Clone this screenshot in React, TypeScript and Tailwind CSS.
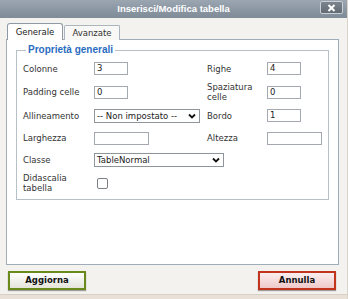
import React from "react";

const sans = { fontFamily: '"DejaVu Sans", Verdana, sans-serif' };

function Field({ value = "", w = "w-[34px]" }: { value?: string; w?: string }) {
  return (
    <div
      className={`${w} h-[13px] border border-[#a3a9ae] bg-white pl-[2px] text-[8.5px] leading-[11px] text-[#222]`}
    >
      {value}
    </div>
  );
}

function Select({ value, w }: { value: string; w: string }) {
  return (
    <div
      className={`${w} h-[14px] border border-[#8e959b] bg-white flex items-center justify-between pl-[2px] pr-[3px] text-[8.5px] text-[#222]`}
    >
      <span className="leading-[12px] whitespace-nowrap">{value}</span>
      <svg width="8" height="6" viewBox="0 0 8 6">
        <path d="M1 1.5 L4 4.5 L7 1.5" stroke="#111" strokeWidth="1.8" fill="none" />
      </svg>
    </div>
  );
}

function Label({ children }: { children: React.ReactNode }) {
  return <div className="text-[8.5px] leading-[10px] text-[#333]">{children}</div>;
}

export default function App() {
  return (
    <div
      className="w-[348px] h-[299px] bg-[#f3f2ee] flex flex-col overflow-hidden border-r border-[#d8d4cc]"
      style={sans}
    >
      {/* title bar */}
      <div className="relative h-[18px] shrink-0 bg-gradient-to-b from-[#9ba6b1] via-[#8c98a4] to-[#7f8b97] flex items-center justify-center">
        <span
          className="text-white font-bold text-[9.5px] leading-none"
          style={{ fontFamily: '"Liberation Sans", Arial, sans-serif' }}
        >
          Inserisci/Modifica tabella
        </span>
        <div className="absolute right-[4px] top-[1px] w-[23px] h-[13px] rounded-[2px] border border-[#c9cfd5] bg-gradient-to-b from-[#7c858e] to-[#626b74] flex items-center justify-center">
          <svg width="9" height="8" viewBox="0 0 9 8">
            <path d="M1.5 1 L7.5 7 M7.5 1 L1.5 7" stroke="#fff" strokeWidth="2" />
          </svg>
        </div>
      </div>

      {/* tabs */}
      <div className="flex items-end h-[17px] mt-[5px] pl-[7px] gap-[1px] relative z-10">
        <div className="w-[56px] h-[17px] bg-white border border-b-0 border-[#8d9aa5] rounded-t-[3px] flex items-center justify-center text-[8.5px] text-[#222]">
          Generale
        </div>
        <div className="w-[56px] h-[15px] bg-[#f8f8f6] border border-b-0 border-[#aab5bd] rounded-t-[2px] flex items-center justify-center text-[8.5px] text-[#333]">
          Avanzate
        </div>
      </div>

      {/* panel */}
      <div className="ml-[6px] w-[333px] h-[226px] -mt-px border border-[#9eadb7] bg-white px-[9px] pt-[4px]">
        <fieldset className="h-[156px] border border-[#b7c0c5] px-[6px]">
          <legend
            className="ml-[3px] px-[2px] text-[10px] leading-[12px] font-bold text-[#2b6cbf]"
            style={{ fontFamily: '"Liberation Sans", Arial, sans-serif' }}
          >
            Proprietà generali
          </legend>
          <div className="grid grid-cols-[71px_113px_60px_1fr] grid-rows-[23px_24px_23px_22px_22px_24px] items-center mt-[1px]">
            <Label>Colonne</Label>
            <Field value="3" />
            <Label>Righe</Label>
            <Field value="4" />

            <Label>Padding celle</Label>
            <Field value="0" />
            <Label>
              Spaziatura
              <br />
              celle
            </Label>
            <Field value="0" />

            <Label>Allineamento</Label>
            <Select value="-- Non impostato --" w="w-[106px]" />
            <Label>Bordo</Label>
            <Field value="1" />

            <Label>Larghezza</Label>
            <Field w="w-[55px]" />
            <Label>Altezza</Label>
            <Field w="w-[55px]" />

            <Label>Classe</Label>
            <div className="col-span-3">
              <Select value="TableNormal" w="w-[130px]" />
            </div>

            <Label>
              Didascalia
              <br />
              tabella
            </Label>
            <div className="col-span-3 pl-[3px]">
              <div className="w-[11px] h-[11px] rounded-[2px] border border-[#7b7f83] bg-white" />
            </div>
          </div>
        </fieldset>
      </div>

      {/* buttons */}
      <div className="flex justify-between mt-[6px] pl-[8px] pr-[11px]">
        <button className="w-[78px] h-[19px] border-2 border-[#6b8a1c] bg-gradient-to-b from-[#ffffff] to-[#e4e4da] shadow-[0_1px_1px_rgba(0,0,0,0.35)] text-[8.5px] font-bold text-[#111]">
          Aggiorna
        </button>
        <button className="w-[78px] h-[19px] border-2 border-[#c2341c] bg-gradient-to-b from-[#fbeeee] to-[#efc9c9] shadow-[0_1px_1px_rgba(0,0,0,0.35)] text-[8.5px] font-bold text-[#111]">
          Annulla
        </button>
      </div>

      <div className="mt-auto h-[5px] border-t border-[#d9cfc4] bg-[#e9e1d8]" />
    </div>
  );
}
